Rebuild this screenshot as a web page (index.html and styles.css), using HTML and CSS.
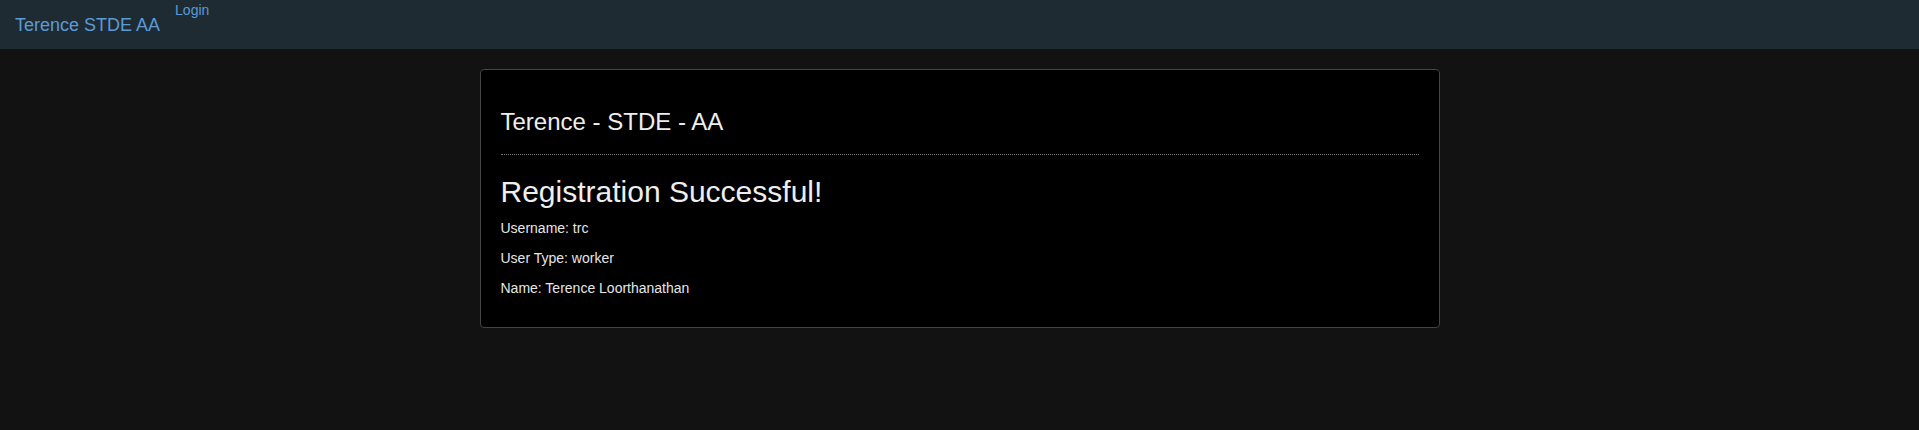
FILE: index.html
```html
<!DOCTYPE html>
<html lang="en">
<head>
<meta charset="utf-8">
<title>Registration Successful</title>
<link rel="stylesheet" href="styles.css">
</head>
<body>
<nav class="navbar">
  <a class="brand" href="#">Terence STDE AA</a>
  <ul class="nav-links">
    <li><a href="#">Login</a></li>
  </ul>
</nav>
<main class="container">
  <section class="card">
    <div class="page-header">
      <h3 class="site-title">Terence - STDE - AA</h3>
    </div>
    <h2 class="headline">Registration Successful!</h2>
    <p class="info">Username: trc</p>
    <p class="info">User Type: worker</p>
    <p class="info">Name: Terence Loorthanathan</p>
  </section>
</main>
</body>
</html>
```
FILE: styles.css
```css
html, body {
  margin: 0;
  padding: 0;
  background: #121212;
}
body {
  color: #e6e6e6;
  font-family: "Liberation Sans", Arial, sans-serif;
  font-size: 14px;
  line-height: 20px;
}
.navbar {
  display: flex;
  align-items: flex-start;
  height: 49px;
  background: #1e2b33;
}
.brand {
  padding: 15px;
  font-size: 18px;
  line-height: 20px;
  color: #5a9bd8;
  text-decoration: none;
}
.nav-links {
  list-style: none;
  margin: 0;
  padding: 0;
}
.nav-links a {
  color: #5a9bd8;
  text-decoration: none;
  font-size: 14px;
  line-height: 20px;
}
.container {
  padding-top: 20px;
}
.card {
  box-sizing: border-box;
  width: 960px;
  margin: 0 auto;
  background: #000;
  border: 1px solid #444;
  border-radius: 4px;
  padding: 20px 20px 19px;
}
.page-header {
  padding-bottom: 9px;
  border-bottom: 1px dotted #777;
  margin-bottom: 20px;
}
.site-title {
  margin: 19px 0 10px;
  font-size: 24px;
  font-weight: 400;
  line-height: 1.1;
  color: #eee;
}
.headline {
  margin: 0 0 10px;
  font-size: 30px;
  font-weight: 400;
  line-height: 1.1;
  color: #eee;
}
.info {
  margin: 0 0 10px;
  color: #e6e6e6;
}
```
